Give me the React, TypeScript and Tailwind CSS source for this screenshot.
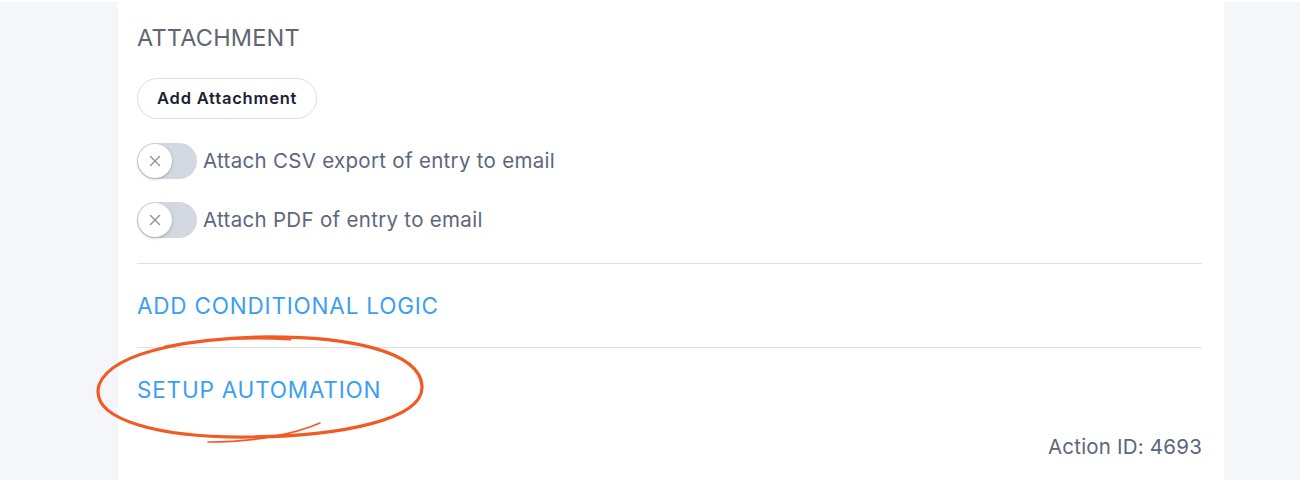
import React from "react";

function Toggle() {
  return (
    <div className="relative h-[36px] w-[60px] shrink-0 rounded-full bg-[#d3d7e0]">
      <div className="absolute left-[1px] top-[1px] flex h-[34px] w-[34px] items-center justify-center rounded-full bg-white shadow-[0_1px_3px_rgba(0,0,0,0.25)]">
        <svg width="12" height="12" viewBox="0 0 12 12" fill="none">
          <path d="M1.5 1.5l9 9M10.5 1.5l-9 9" stroke="#8a91a3" strokeWidth="1.4" strokeLinecap="round" />
        </svg>
      </div>
    </div>
  );
}

function Circled() {
  // hand-drawn marker ring round the automation link
  return (
    <svg className="pointer-events-none absolute left-[-47px] top-[-45px]" width="345" height="118" viewBox="0 0 345 118" fill="none">
      <path
        d="M200 9 C 115 4, 22 20, 9 55 C -1 90, 70 108, 160 107 C 250 106, 334 90, 332 56 C 330 22, 262 6, 170 7 C 135 8, 100 12, 75 17"
        stroke="#f15a24"
        strokeWidth="3.2"
        strokeLinecap="round"
      />
      <path d="M118 112 C 165 112, 205 104, 230 93" stroke="#f15a24" strokeWidth="1.6" strokeLinecap="round" />
    </svg>
  );
}

export default function App() {
  return (
    <div className="min-h-[480px] bg-[#f5f6fa] font-['Inter',sans-serif]">
      <div className="ml-[118px] mt-[2px] h-[478px] w-[1106px] bg-white px-[19px] pt-[22px]">
        <h3 className="text-[23.5px] leading-[28px] tracking-[0.2px] text-[#5f6673]">ATTACHMENT</h3>

        <button className="mt-[26px] h-[41px] rounded-full border border-[#dadde5] px-[19px] text-[16.5px] font-semibold tracking-[0.8px] text-[#1a2233]">
          Add Attachment
        </button>

        <div className="mt-[24px] flex flex-col gap-[23px]">
          <label className="flex items-center gap-[6px] text-[20.5px] tracking-[0.3px] text-[#5c667d]">
            <Toggle />
            Attach CSV export of entry to email
          </label>
          <label className="flex items-center gap-[6px] text-[20.5px] tracking-[0.3px] text-[#5c667d]">
            <Toggle />
            Attach PDF of entry to email
          </label>
        </div>

        <div className="mr-[3px]">
          <div className="mt-[25px] border-t border-[#dfe1e6]" />
          <div className="py-[27px] text-[22.5px] leading-[29px] tracking-[0.8px] text-[#3b9ef5]">ADD CONDITIONAL LOGIC</div>
          <div className="border-t border-[#dfe1e6]" />
          <div className="pt-[27px]">
            <span className="relative inline-block text-[22.5px] leading-[30px] tracking-[0.8px] text-[#3b9ef5]">
              SETUP AUTOMATION
              <Circled />
            </span>
          </div>
          <div className="mt-[27px] text-right text-[20.5px] tracking-[0.2px] text-[#5c667d]">Action ID: 4693</div>
        </div>
      </div>
    </div>
  );
}
